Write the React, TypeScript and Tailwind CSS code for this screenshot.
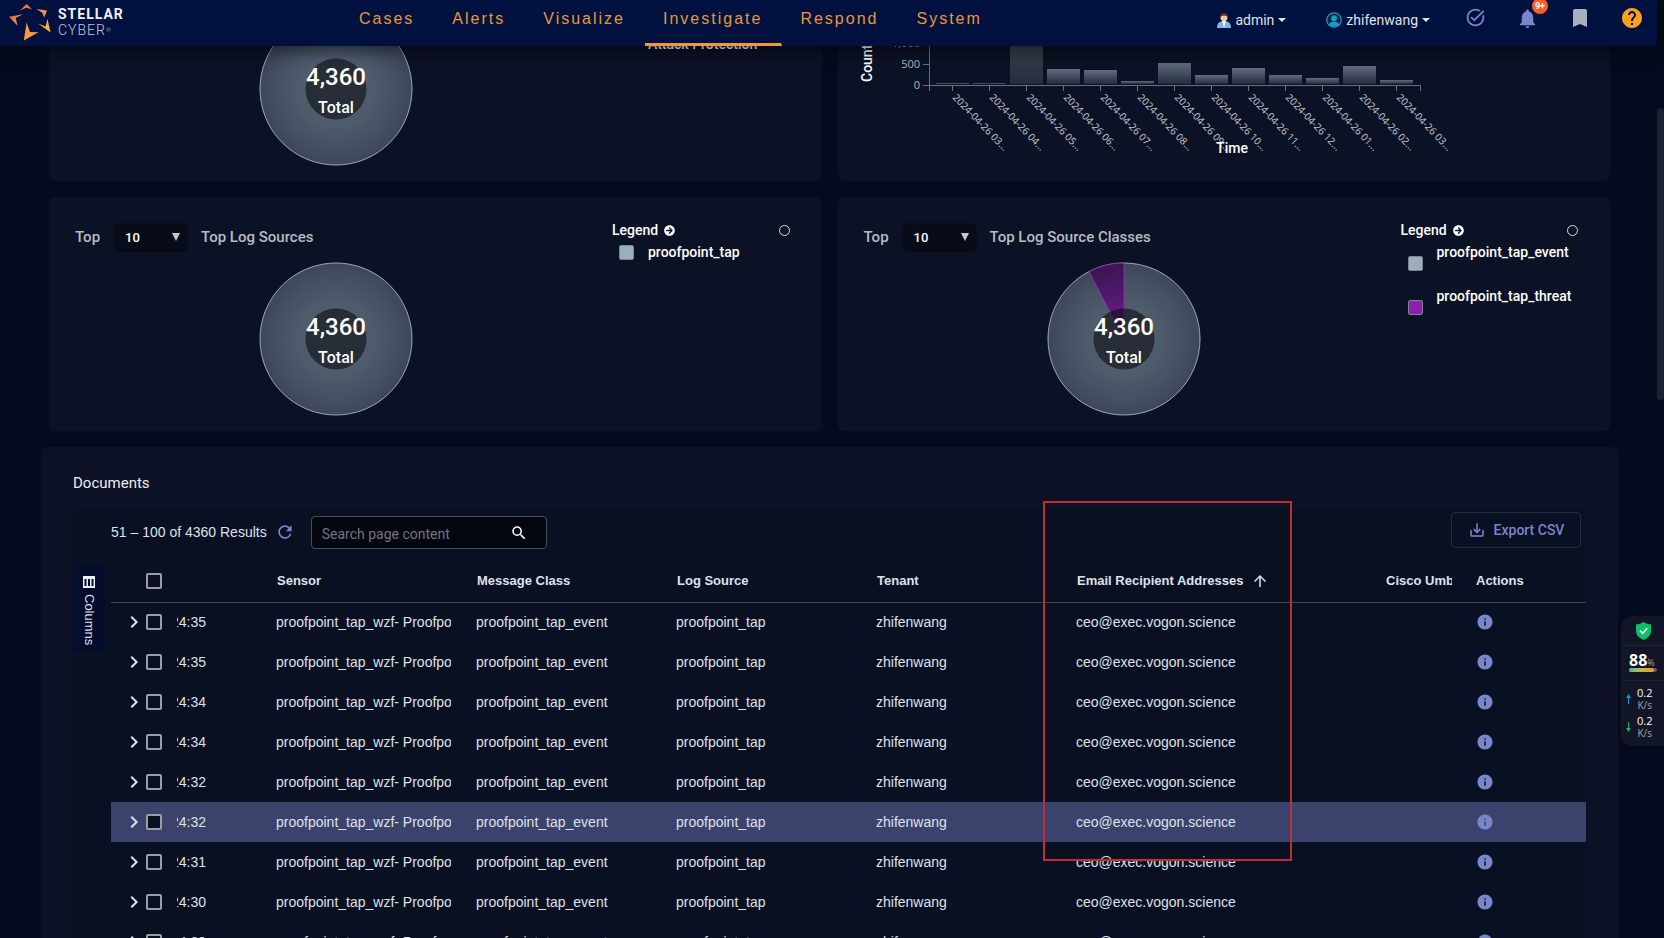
import { useState } from "react";
import { FaArrowCircleRight } from "react-icons/fa";
import {
  MdAccountCircle,
  MdArrowUpward,
  MdBookmark,
  MdChevronRight,
  MdHelp,
  MdInfo,
  MdNotifications,
  MdRefresh,
  MdSaveAlt,
  MdSearch,
  MdTaskAlt,
} from "react-icons/md";

const NAV_ITEMS = ["Cases", "Alerts", "Visualize", "Investigate", "Respond", "System"];

const COLUMNS = ["Sensor", "Message Class", "Log Source", "Tenant"];

const TIMES = ["24:35", "24:35", "24:34", "24:34", "24:32", "24:32", "24:31", "24:30", "24:29"];
const ACTIVE_ROW = 5;

// Height in px and label for every hourly bucket
const BARS = [
  { height: 1, label: "2024-04-26 03..." },
  { height: 1, label: "2024-04-26 04..." },
  { height: 60, label: "2024-04-26 05..." },
  { height: 15, label: "2024-04-26 06..." },
  { height: 14, label: "2024-04-26 07..." },
  { height: 3, label: "2024-04-26 08..." },
  { height: 21, label: "2024-04-26 09..." },
  { height: 9, label: "2024-04-26 10..." },
  { height: 16, label: "2024-04-26 11..." },
  { height: 9, label: "2024-04-26 12..." },
  { height: 6, label: "2024-04-26 01..." },
  { height: 18, label: "2024-04-26 02..." },
  { height: 4, label: "2024-04-26 03..." },
];

type LegendItem = { label: string; color: string };

function Logo() {
  return (
    <a href="#home" className="flex items-center gap-[7px] pl-[9px]">
      <svg width="42" height="38" viewBox="9 3 42 38" aria-hidden="true">
        <defs>
          <linearGradient id="star" x1="0" y1="0" x2="1" y2="1">
            <stop offset="0" stopColor="#ef5f3a" />
            <stop offset="1" stopColor="#f6a944" />
          </linearGradient>
        </defs>
        <path d="M26.6 4 L32.2 9.6 L26.3 7.8 L20 10.6 Z" fill="#ee7642" />
        <path d="M36.4 9 L47 10.6 L44.2 17.4 L42.4 12.8 Z" fill="#f09a45" />
        <path d="M47.5 19 L50.6 32.6 L38 23.4 L45.6 26.4 Z" fill="#f6a944" />
        <path d="M26.6 22.4 L30 32 L38.6 32.2 L23.8 40.4 Z" fill="#f39a3f" />
        <path d="M9 16.8 L23.2 14.2 L15.6 18 L17.6 25.8 Z" fill="url(#star)" />
      </svg>
      <span className="flex flex-col text-sm leading-4 tracking-[1px] text-[#c3c9da]">
        <span className="font-bold text-[#eef0f6]">STELLAR</span>
        <span className="font-light">
          CYBER<sup className="text-[6px]">®</sup>
        </span>
      </span>
    </a>
  );
}

function Caret() {
  return (
    <svg width="8" height="4" viewBox="0 0 8 4" aria-hidden="true">
      <path d="M0 0 H8 L4 4 Z" fill="#dfe2ea" />
    </svg>
  );
}

function Header() {
  return (
    <header className="relative z-20 mr-[7px] flex h-[46px] items-stretch rounded-br bg-[#001140] shadow-[0_4px_18px_rgba(0,0,0,0.6)]">
      <div className="flex w-[341px] items-start pt-[3px]">
        <Logo />
      </div>

      <nav className="flex font-['Liberation_Sans',sans-serif]">
        {NAV_ITEMS.map((item) => (
          <a
            key={item}
            href={`#${item.toLowerCase()}`}
            className={`border-r border-r-[#020e35] pt-[7px] pr-[19px] pl-[18px] text-base tracking-[2px] text-[#e8973c] ${
              item === "Investigate" ? "border-b-[3px] border-b-[#ee9a3c]" : ""
            }`}
          >
            {item}
          </a>
        ))}
      </nav>

      <div className="ml-auto flex text-sm text-[#dfe2ea]">
        <button type="button" className="mr-10 flex h-10 items-center gap-1">
          <svg width="14" height="17" viewBox="0 0 14 17" aria-hidden="true">
            <path d="M0 16 Q0 10 4.5 9.6 H9.5 Q14 10 14 16 Z" fill="#7fb4e6" />
            <path d="M5 9 H9 L7 16 Z" fill="#f3f6fb" />
            <circle cx="7" cy="5.4" r="3.6" fill="#f2c79b" />
            <path d="M3 6 Q2.4 0.6 7 0.6 Q11.6 0.6 11 6 Q10.4 3.6 7 3.6 Q3.8 3.6 3 6 Z" fill="#4a2d20" />
          </svg>
          admin
          <Caret />
        </button>
        <button type="button" className="mr-[19px] flex h-10 items-center gap-1">
          {/* Ringed avatar */}
          <svg width="16" height="16" viewBox="0 0 16 16" aria-hidden="true">
            <circle cx="8" cy="8" r="7.2" fill="#06283f" stroke="#139dc9" strokeWidth="1.2" />
            <circle cx="8" cy="6.2" r="3" fill="#139dc9" />
            <path d="M2.800 12.800 Q4 9.600 8 9.600 Q12 9.600 13.200 12.800 Q8 17 2.800 12.800 Z" fill="#139dc9" />
          </svg>
          zhifenwang
          <Caret />
        </button>
        <button type="button" aria-label="Tasks" className="flex w-[52px] justify-center border-l border-[#020e35] pt-[7px]">
          <MdTaskAlt size={21} className="text-[#7986cb]" />
        </button>
        <button type="button" aria-label="Notifications" className="relative flex w-[52px] justify-center border-l border-[#020e35] pt-[7px]">
          <MdNotifications size={23} className="text-[#7986cb]" />
          <span className="absolute -top-0.5 right-[5px] flex size-4 items-center justify-center rounded-full bg-[#fb5a2c] text-[9px] font-bold text-white">
            9+
          </span>
        </button>
        <button type="button" aria-label="Bookmarks" className="flex w-[52px] justify-center border-l border-[#020e35] pt-1.5">
          <MdBookmark size={24} className="text-[#a9afc2]" />
        </button>
        <button type="button" aria-label="Help" className="flex w-[52px] justify-center border-l border-[#020e35] pt-1.5">
          <MdHelp size={24} className="text-[#f6a11f]" />
        </button>
      </div>
    </header>
  );
}

function Donut({ withThreat = false }: { withThreat?: boolean }) {
  return (
    <svg width="154" height="154" viewBox="-77 -77 154 154" className="shrink-0" role="img" aria-label="4,360 Total">
      <defs>
        <radialGradient id="ring">
          <stop offset="0" stopColor="#55626f" />
          <stop offset="0.5" stopColor="#4e5b6b" />
          <stop offset="1" stopColor="#3e475a" />
        </radialGradient>
        <radialGradient id="threat" gradientUnits="userSpaceOnUse" cx="0" cy="0" r="76">
          <stop offset="0.4" stopColor="#5c1a7c" />
          <stop offset="1" stopColor="#3a164f" />
        </radialGradient>
      </defs>
      <circle r="76" fill="url(#ring)" stroke="#9aa7b8" />
      {withThreat && (
        <path d="M0 0 L-34.9 -67.5 A76 76 0 0 1 0 -76 Z" fill="url(#threat)" stroke="#8e2aab" />
      )}
      <circle r="30.5" fill="#0c0d12" fillOpacity="0.6" />
      <text y="-4" textAnchor="middle" className="fill-white text-2xl font-medium">
        4,360
      </text>
      <text y="24" textAnchor="middle" className="fill-white text-base font-medium">
        Total
      </text>
    </svg>
  );
}

function TimeChart() {
  return (
    <svg width="660" height="135" viewBox="0 0 660 135" className="shrink-0" role="img" aria-label="Count over time">
      <defs>
        <linearGradient id="bar" x1="0" y1="0" x2="0" y2="1">
          <stop offset="0" stopColor="#626d7d" />
          <stop offset="1" stopColor="#252c40" />
        </linearGradient>
        <linearGradient id="tallBar" x1="0" y1="0" x2="0" y2="1">
          <stop offset="0" stopColor="#454e59" />
          <stop offset="1" stopColor="#262c3c" />
        </linearGradient>
      </defs>

      <text transform="translate(34 36) rotate(-90)" className="fill-white text-sm font-medium">
        Count
      </text>

      <g className="fill-[#b4b8c0] font-['Open_Sans',sans-serif] text-[11px]">
        <text x="82" y="1" textAnchor="end">1,000</text>
        <text x="82" y="22" textAnchor="end">500</text>
        <text x="82" y="43" textAnchor="end">0</text>
      </g>

      {BARS.map((bar, i) => {
        const x = 114 + i * 37;
        return (
          <g key={i}>
            <rect
              x={x - 16}
              y={38 - bar.height}
              width="33"
              height={bar.height}
              fill={bar.height > 40 ? "url(#tallBar)" : "url(#bar)"}
            />
            <path d={`M${x + 0.5} 39 V45`} stroke="#6e7079" />
            <text
              transform={`translate(${x} 52) rotate(46)`}
              className="fill-[#c0c3ca] font-['Noto_Sans',sans-serif] text-[10px]"
            >
              {bar.label}
            </text>
          </g>
        );
      })}
      <path d="M91.5 0 V45 M85 18.5 H91 M85 39.5 H582.5 V45" fill="none" stroke="#6e7079" />

      <text x="394" y="107" textAnchor="middle" className="fill-white text-sm font-medium">
        Time
      </text>
    </svg>
  );
}

function SourcePanel({ id, title, items }: { id: string; title: string; items: LegendItem[] }) {
  const [top, setTop] = useState<string>("10");
  const tall = items.length > 1;

  return (
    <section className="flex rounded-md bg-[#0c1225] pr-8 pb-[15px]">
      <div className="w-[563px] shrink-0">
        <div className="flex items-center gap-[13px] pt-[26px] pl-[26px] text-[15px] font-medium text-[#b9bbc2]">
          <label htmlFor={id}>Top</label>
          <div className="relative">
            <select
              id={id}
              value={top}
              onChange={(e) => setTop(e.target.value)}
              className="block h-[29px] w-[75px] appearance-none rounded-md bg-[#080b18] pl-3 text-[13px] font-medium text-white"
            >
              <option value="5">5</option>
              <option value="10">10</option>
              <option value="20">20</option>
            </select>
            <svg width="8" height="8" viewBox="0 0 8 8" className="pointer-events-none absolute top-2.5 right-2" aria-hidden="true">
              <path d="M0 0 H8 L4 8 Z" fill="#c6c8cf" />
            </svg>
          </div>
          <h3>{title}</h3>
        </div>
        <div className="flex justify-center pt-2.5 pl-2.5">
          <Donut withThreat={tall} />
        </div>
      </div>

      <div className="flex-1 pt-[22px] text-sm leading-[22px] font-medium text-white">
        <div className="flex items-center">
          Legend
          <FaArrowCircleRight size={11} className="ml-1.5" />
          <input
            type="radio"
            aria-label={`Select ${title}`}
            className="ml-auto size-[11px] appearance-none rounded-full border-[1.5px] border-[#d9dbe0]"
          />
        </div>
        <ul className="pl-[7px]">
          {items.map((item) => (
            <li key={item.label} className={`flex gap-3.5 ${tall ? "h-11" : "h-[22px]"}`}>
              <span
                className="size-[15px] shrink-0 self-center rounded-xs border border-[#7d8588]"
                style={{ backgroundColor: item.color }}
              />
              {item.label}
            </li>
          ))}
        </ul>
      </div>
    </section>
  );
}

function ColumnsTab() {
  return (
    <button
      type="button"
      className="mt-1 flex h-[87px] w-[33px] shrink-0 items-center gap-1.5 bg-[#040d2b] pt-[11px] pr-px text-[13px] text-[#dfe2ea] [writing-mode:vertical-rl]"
    >
      <svg width="12" height="12" viewBox="0 0 12 12" aria-hidden="true">
        <path d="M0 0 H12 V12 H0 Z M1.5 3 V10 H3.5 V3 Z M5 3 V10 H7 V3 Z M8.5 3 V10 H10.5 V3 Z" fill="#eceef3" fillRule="evenodd" />
      </svg>
      Columns
    </button>
  );
}

const checkboxClass =
  "block size-4 shrink-0 appearance-none rounded-xs border-2 border-[#9b9da3] bg-[#081022]";

function DocumentsTable() {
  return (
    <table className="w-full table-fixed text-left text-sm whitespace-nowrap text-[#dfe2ea]">
      <colgroup>
        <col className="w-[66px]" />
        <col className="w-[99px]" />
        <col className="w-[200px]" />
        <col className="w-[200px]" />
        <col className="w-[200px]" />
        <col className="w-[200px]" />
        <col />
        <col className="w-[90px]" />
        <col className="w-[110px]" />
      </colgroup>
      <thead>
        <tr className="h-[41px] border-b border-[#42474e] text-[13px]">
          <th>
            <input type="checkbox" aria-label="Select all rows" className={`ml-[35px] ${checkboxClass}`} />
          </th>
          <th aria-label="Time" />
          {COLUMNS.map((column) => (
            <th key={column} className="pl-px">{column}</th>
          ))}
          <th className="pl-px" aria-sort="ascending">
            <div className="flex items-center gap-2">
              Email Recipient Addresses
              <MdArrowUpward size={18} />
            </div>
          </th>
          <th>
            <div className="mr-6 overflow-hidden">Cisco Umbrella</div>
          </th>
          <th>Actions</th>
        </tr>
      </thead>
      <tbody>
        {TIMES.map((time, i) => (
          <tr key={i} className={`h-10 ${i === ACTIVE_ROW ? "bg-[#3b436d]" : ""}`}>
            <td>
              <div className="flex items-center pl-[11px]">
                <button type="button" aria-label="Expand row">
                  <MdChevronRight size={24} />
                </button>
                <input type="checkbox" aria-label={`Select row ${i + 1}`} className={checkboxClass} />
              </div>
            </td>
            <td>
              <div className="flex w-[29px] justify-end overflow-hidden">{time}</div>
            </td>
            <td>
              <div className="mr-[25px] overflow-hidden">proofpoint_tap_wzf- Proofpoint</div>
            </td>
            <td>proofpoint_tap_event</td>
            <td>proofpoint_tap</td>
            <td>zhifenwang</td>
            <td>ceo@exec.vogon.science</td>
            <td />
            <td>
              <button type="button" aria-label="Details" className="block text-[#7986cb]">
                <MdInfo size={18} />
              </button>
            </td>
          </tr>
        ))}
      </tbody>
    </table>
  );
}

function Documents() {
  const [search, setSearch] = useState<string>("");

  return (
    <section className="mt-4 rounded-md bg-[#0c1125] px-8 pt-6">
      <h2 className="mb-[13px] text-[15px] leading-6 text-[#eceef3]">Documents</h2>

      <div className="relative bg-[#081022] pt-1 font-['Liberation_Sans',sans-serif]">
        <div className="mb-[11px] flex h-[38px] items-start pl-[38px] text-sm text-[#dfe2ea]">
          <span className="pt-2.5">51 – 100 of 4360 Results</span>
          <button type="button" aria-label="Refresh" className="mt-2.5 ml-2 text-[#7986cb]">
            <MdRefresh size={20} />
          </button>
          <div className="mt-1 ml-4 flex h-[33px] w-[236px] items-center rounded-sm border border-[#4b4e58] bg-[#03050f] pr-[18px] pl-2.5">
            <input
              type="text"
              aria-label="Search page content"
              placeholder="Search page content"
              value={search}
              onChange={(e) => setSearch(e.target.value)}
              className="min-w-0 flex-1 bg-transparent pt-0.5 font-[Roboto,sans-serif] text-sm outline-none placeholder:text-[#74777f]"
            />
            <MdSearch size={18} className="text-white" />
          </div>
          <button
            type="button"
            className="mr-[5px] ml-auto flex h-9 w-[130px] items-center justify-center gap-2 rounded-sm border border-[#242b40] font-[Roboto,sans-serif] font-medium text-[#7986cb]"
          >
            <MdSaveAlt size={18} />
            Export CSV
          </button>
        </div>

        <div className="flex items-start gap-[5px]">
          <ColumnsTab />
          <div className="min-w-0 flex-1">
            <DocumentsTable />
          </div>
        </div>

        {/* Highlight around the sorted column */}
        <div className="pointer-events-none absolute -top-[7px] left-[970px] h-[360px] w-[249px] border-2 border-[#c22c35]" />
      </div>
    </section>
  );
}

function Speed({ up = false }: { up?: boolean }) {
  return (
    <div className="flex h-7 items-center gap-1.5 pl-[3px]">
      <svg width="5" height="10" viewBox="0 0 5 10" className={up ? "" : "rotate-180"} aria-hidden="true">
        <path d="M2.5 0 L5 4 H3 V10 H2 V4 H0 Z" fill={up ? "#2492dc" : "#1fae62"} />
      </svg>
      <div className="text-center leading-3">
        <p className="text-[11px] text-white">0.2</p>
        <p className="text-[10px] text-[#a3a6b0]">K/s</p>
      </div>
    </div>
  );
}

// Floating system monitor docked to the right edge
function Monitor() {
  return (
    <aside className="absolute top-[616px] right-0 z-10 h-[130px] w-[43px] rounded-l-xl bg-[#111525] pl-0.5 font-['Open_Sans',sans-serif]">
      <div className="flex h-[30px] items-center justify-center border-b border-[#1d2233]">
        <svg width="15" height="18" viewBox="0 0 15 18" aria-hidden="true">
          <path d="M7.5 0 Q10.5 2.4 15 2.6 V9 Q15 15 7.5 18 Q0 15 0 9 V2.6 Q4.5 2.4 7.5 0 Z" fill="#0cc068" />
          <path d="M4 8.6 L6.7 11.4 L11.2 6.2" fill="none" stroke="#fff" strokeWidth="1.6" />
        </svg>
      </div>
      <div className="h-[35px] border-b border-[#1d2233] pt-[7px] pl-1.5">
        <p className="flex h-3.5 items-baseline text-base leading-3.5 font-bold text-white">
          88<span className="text-[9px] font-normal text-[#a3a6b0]">%</span>
        </p>
        <div className="mt-px h-1 w-7 rounded-full bg-[#5a5d66]">
          <div className="h-1 rounded-full bg-linear-to-r from-[#36b8a8] via-[#c9b63a] to-[#f0932b]" style={{ width: "88%" }} />
        </div>
      </div>
      <div className="pt-1">
        <Speed up />
        <Speed />
      </div>
    </aside>
  );
}

function App() {
  return (
    <div className="relative h-screen overflow-hidden bg-[#050b1e] font-[Roboto,sans-serif] text-white">
      <Header />

      <main className="pr-[46px] pl-[41px]">
        <div className="grid grid-cols-2 gap-4 px-2">
          <section className="flex h-[135px] items-start overflow-hidden rounded-b-md bg-[#0c1225]">
            <div className="flex h-full w-[563px] shrink-0 items-end justify-center pb-[15px] pl-2.5">
              <Donut />
            </div>
            <p className="-mt-[13px] pl-9 text-sm leading-[22px] font-medium">Attack Protection</p>
          </section>
          <section className="flex h-[135px] overflow-hidden rounded-b-md bg-[#0c1225]">
            <TimeChart />
          </section>

          <SourcePanel
            id="top-sources"
            title="Top Log Sources"
            items={[{ label: "proofpoint_tap", color: "#9bafba" }]}
          />
          <SourcePanel
            id="top-classes"
            title="Top Log Source Classes"
            items={[
              { label: "proofpoint_tap_event", color: "#9bafba" },
              { label: "proofpoint_tap_threat", color: "#8f1fb0" },
            ]}
          />
        </div>

        <Documents />
      </main>

      {/* Page scroll thumb */}
      <div className="absolute top-[108px] right-0 h-[292px] w-[7px] rounded-sm bg-[#1b2131]" />
      <Monitor />
    </div>
  );
}

export default App;
